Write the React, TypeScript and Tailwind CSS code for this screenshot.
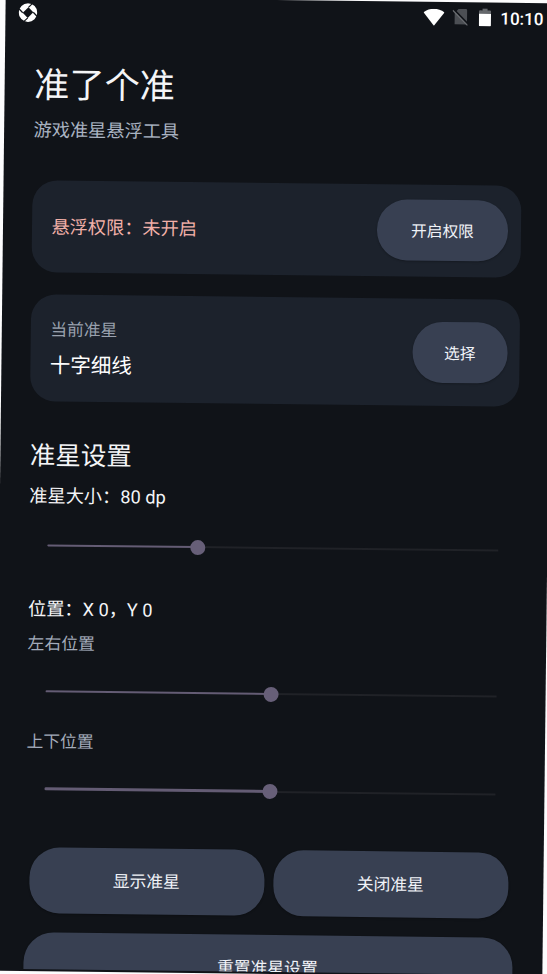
import clsx from "clsx";

type SliderProps = {
  value: number;
  thick?: boolean;
};

function Slider({ value, thick }: SliderProps) {
  return (
    <div className="flex h-[30px] items-center pl-[19.5px] pr-[18.5px]">
      <div
        className={clsx("rounded-full bg-[#645c74]", thick ? "h-[3px]" : "h-[2px]")}
        style={{ width: `${value}%` }}
      />
      <div className="relative -mx-[7.5px] size-[15px] shrink-0 rounded-full bg-[#675f78]" />
      <div className="h-[2px] flex-1 bg-[#202227]" />
    </div>
  );
}

type PillProps = {
  label: string;
  className?: string;
};

function Pill({ label, className }: PillProps) {
  return (
    <button
      className={clsx(
        "flex shrink-0 items-center justify-center rounded-[30px] bg-[#384052] pt-[2px] text-[#f1f3f8] shadow-[0_1px_2px_rgba(0,0,0,0.25)]",
        className
      )}
    >
      {label}
    </button>
  );
}

function StatusBar() {
  return (
    <div className="flex h-[30px] shrink-0 items-center pl-[13px] pr-[10px]">
      <svg width="19" height="19" viewBox="0 0 18 18" fill="#fff">
        <circle cx="9" cy="9" r="8.8" />
        <path d="M9.4 4L14 8.6L8.8 14L4 9.2Z" fill="#101318" />
        <g stroke="#101318" strokeWidth="1.1">
          <path d="M9.4 4L13.2 0.2" />
          <path d="M14 8.6L17.8 12.6" />
          <path d="M8.8 14L4.8 17.8" />
          <path d="M4 9.2L0.2 5.2" />
        </g>
      </svg>

      <div className="ml-auto flex items-center">
        <svg width="21" height="17" viewBox="0 0 21 17" fill="#fff">
          <path d="M0 3.6C6.2-1.2 14.8-1.2 21 3.6L10.5 17Z" />
        </svg>
        <svg className="ml-2" width="16" height="18" viewBox="0 0 16 18">
          <path d="M6 0.8H13.4Q14.6 0.8 14.6 2V16.2H2.2V5Z" fill="#4c4f54" />
          <path d="M1.2 1.4L15.8 16" stroke="#101318" strokeWidth="1.8" />
          <path d="M0.2 2.2L15 17.2" stroke="#6b6e72" strokeWidth="1.1" />
        </svg>
        <svg className="ml-[10px]" width="13" height="18" viewBox="0 0 13 18">
          <path d="M4 0H9V2H11.5Q12.5 2 12.5 3V6H0.5V3Q0.5 2 1.5 2H4Z" fill="#65686c" />
          <path d="M0.5 5.4H12.5V17Q12.5 18 11.5 18H1.5Q0.5 18 0.5 17Z" fill="#fff" />
        </svg>
        <span className="ml-[9px] pt-px text-[17px] font-medium leading-[18px] text-white">10:10</span>
      </div>
    </div>
  );
}

export default function App() {
  return (
    <div className="h-[974px] w-[547px] overflow-hidden bg-[#fcfcfd]">
      <div className="-ml-[0.5px] h-[974px] w-[548px] rotate-[0.666deg] bg-[#101318] pb-[2px] font-[Roboto,'Noto_Sans_CJK_SC',sans-serif] text-[#f4f5f7]">
        <div className="flex h-[972px] flex-col overflow-hidden">
          <StatusBar />

          <main className="shrink-0 pl-[28.5px] pr-[30.5px] pt-[38px]">
            <h1 className="pl-px text-[35.2px] leading-[40px]">准了个准</h1>
            <p className="mt-[13px] pl-px text-[18.2px] leading-[24px] text-[#aab3c2]">游戏准星悬浮工具</p>

            {/* Overlay permission */}
            <section className="mt-[37.5px] flex h-[92.5px] items-center justify-between rounded-[25px] bg-[#1c222c] pl-5 pr-[12.5px]">
              <span className="pt-[2px] text-[18.2px] leading-[24px] text-[#f2b0a8]">悬浮权限：未开启</span>
              <Pill label="开启权限" className="h-[61px] w-[131px] text-[15.7px]" />
            </section>

            {/* Selected crosshair */}
            <section className="mt-[22px] flex h-[107px] items-center justify-between rounded-[25px] bg-[#1c222c] pl-5 pr-[12px]">
              <div className="pt-px">
                <p className="text-[16.8px] leading-[24px] text-[#99a1ae]">当前准星</p>
                <p className="mt-[10px] text-[20.5px] leading-[28px] text-white">十字细线</p>
              </div>
              <Pill label="选择" className="h-[61px] w-[94.5px] text-[15.7px]" />
            </section>

            <h2 className="mt-[38px] pl-px text-[25.5px] leading-[32px]">准星设置</h2>
            <p className="mt-[13px] pl-px text-[18.2px] leading-[24px]">准星大小：80 dp</p>
            <div className="mt-[22px]">
              <Slider value={33.33} />
            </div>

            <p className="mt-[36.5px] pl-px text-[18.2px] leading-[24px]">位置：X 0，Y 0</p>
            <p className="mt-[11.5px] pl-px text-[16.8px] leading-[22px] text-[#a3abba]">左右位置</p>
            <div className="mt-[22px]">
              <Slider value={50} />
            </div>
            <p className="mt-6 pl-px text-[16.8px] leading-[22px] text-[#a3abba]">上下位置</p>
            <div className="mt-[21.5px]">
              <Slider value={50} thick />
            </div>

            <div className="mt-[43px] flex gap-[9px] px-[5px]">
              <Pill label="显示准星" className="h-[66px] w-[235px] text-[16.8px]" />
              <Pill label="关闭准星" className="h-[66px] w-[235px] text-[16.8px]" />
            </div>
            <Pill label="重置准星设置" className="mt-[19px] h-[66px] w-full text-[16.8px]" />
          </main>
        </div>
      </div>
    </div>
  );
}
